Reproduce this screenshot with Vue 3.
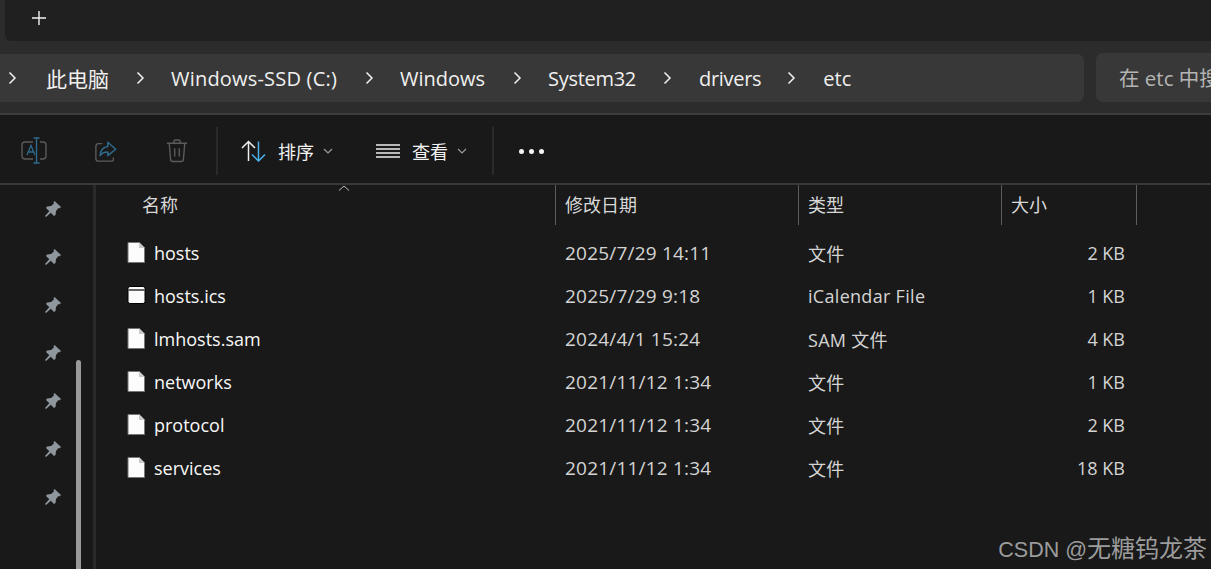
<template>
  <div class="win">
    <div class="tabstrip">
      <div class="tabbar">
        <svg class="plus" width="16" height="16" viewBox="0 0 16 16"><path d="M8 1v14M1 8h14" stroke="#f2f2f2" stroke-width="1.4" /></svg>
      </div>
    </div>

    <div class="nav">
      <div class="crumbs">
        <template v-for="c in crumbs" :key="c.name">
          <svg class="chev" :style="{ marginRight: c.gap + 'px' }" width="9" height="14" viewBox="0 0 9 14"><path d="M1.5 1.5 7 7l-5.500 5.500" fill="none" stroke="#f0f0f0" stroke-width="1.5" /></svg>
          <span class="crumb" :class="{ cjk: c.cjk }" :style="{ marginRight: c.after + 'px', letterSpacing: c.ls + 'px' }">{{ c.name }}</span>
        </template>
      </div>
      <div class="search">在 etc 中搜索</div>
    </div>

    <div class="toolbar">
      <svg class="tool t-rename" width="28" height="28" viewBox="0 0 28 28" fill="none">
        <path d="M13 5H5a3 3 0 0 0-3 3v11a3 3 0 0 0 3 3h8M20 5h3a3 3 0 0 1 3 3v11a3 3 0 0 1-3 3h-3" stroke="#5b5b5b" stroke-width="1.400" />
        <path d="M7 18 11 8.500 15 18M8.500 15h5" stroke="#2f6a8c" stroke-width="1.300" />
        <path d="M13.500 1h6M16.500 1v25M13.500 26h6" stroke="#2f6a8c" stroke-width="1.400" />
      </svg>
      <svg class="tool t-share" width="24" height="23" viewBox="0 0 26 25" fill="none">
        <path d="M9 4H5a3 3 0 0 0-3 3v13a3 3 0 0 0 3 3h14a3 3 0 0 0 2-1v-3" stroke="#5b5b5b" stroke-width="1.500" />
        <path d="M15 2.500 23.500 10 15 17v-4c-4 0-6.500 1-8.500 4 .5-5.500 3.500-9.500 8.500-10z" stroke="#2f6a8c" stroke-width="1.600" stroke-linejoin="round" />
      </svg>
      <svg class="tool t-trash" width="22" height="24" viewBox="0 0 24 26" fill="none" stroke="#5b5b5b" stroke-width="1.500">
        <path d="M1 4.500h22M8.500 4.500V3a2 2 0 0 1 2-2h3a2 2 0 0 1 2 2v1.500" />
        <path d="M3.500 4.500 5 22a2.500 2.500 0 0 0 2.500 2.500h9A2.500 2.500 0 0 0 19 22l1.500-17.500" />
        <path d="M9.500 10v9M14.500 10v9" />
      </svg>
      <div class="vsep first"></div>
      <svg class="sort" width="25" height="22" viewBox="0 0 25 22" fill="none" stroke-width="1.500">
        <path d="M1 8 7.500 1.500 14 8M7.500 1.500V21" stroke="#f0f0f0" />
        <path d="M11 14.500 17.500 21 24 14.500M17.500 21V1.500" stroke="#4cb2ea" />
      </svg>
      <span class="tlabel l-sort">排序</span>
      <svg class="caret" width="10" height="6" viewBox="0 0 10 6"><path d="M1 1l4 4 4-4" fill="none" stroke="#9a9a9a" stroke-width="1.200" /></svg>
      <svg class="lines" width="24" height="14" viewBox="0 0 24 14"><path d="M0 1h24M0 5h24M0 9h24M0 13h24" stroke="#ededed" stroke-width="1.300" /></svg>
      <span class="tlabel l-view">查看</span>
      <svg class="caret" width="10" height="6" viewBox="0 0 10 6"><path d="M1 1l4 4 4-4" fill="none" stroke="#9a9a9a" stroke-width="1.200" /></svg>
      <div class="vsep second"></div>
      <div class="more"><i></i><i></i><i></i></div>
    </div>

    <div class="body">
      <aside class="side">
        <svg v-for="n in 7" :key="n" class="pin" width="16" height="16" viewBox="0 0 16 16">
          <path d="M9.500 0 16 6l-1.500 1.500-1-.5L11 10l-.5 4L9 15l-3.200-3.300L1 16l-1-1 4.300-4.800L1 7l1-1.500L6 5l3-2.500-.5-1.300z" fill="#8f979e" />
        </svg>
        <div class="thumb"></div>
      </aside>
      <div class="split"></div>
      <main class="list">
        <div class="head row-grid">
          <div class="hcell hname">名称<svg class="sortup" width="12" height="6" viewBox="0 0 12 6"><path d="M1 5.500 6 1l5 4.500" fill="none" stroke="#bdbdbd" stroke-width="1" /></svg></div>
          <div class="hcell">修改日期</div>
          <div class="hcell">类型</div>
          <div class="hcell">大小</div>
          <div class="hcell last"></div>
        </div>
        <div class="rows">
          <div v-for="f in files" :key="f.name" class="row row-grid">
            <div class="cname">
              <svg v-if="f.cal" class="ficon" width="19" height="21" viewBox="0 0 19 21">
                <rect x="1" y="1.500" width="17" height="17" rx="2" fill="#fcfcfc" stroke="#000" />
                <path d="M1.500 5h16" stroke="#333" stroke-width="1.500" />
              </svg>
              <svg v-else class="ficon" width="19" height="21" viewBox="0 0 19 21">
                <path d="M1 .5h11.500L17.500 5.500v15H1z" fill="#fcfcfc" stroke="#777" />
                <path d="M12 .5v5.500h5.500z" fill="#c9c9c9" />
              </svg>
              <span>{{ f.name }}</span>
            </div>
            <div class="cell date">{{ f.date }}</div>
            <div class="cell type">{{ f.type }}</div>
            <div class="cell size">{{ f.size }}</div>
          </div>
        </div>
      </main>
    </div>
    <div class="mark"><span>CSDN @</span>无糖钨龙茶</div>
  </div>
</template>

<script setup>
const crumbs = [
  { name: '此电脑', gap: 29, after: 27, ls: 0, cjk: true },
  { name: 'Windows-SSD (C:)', gap: 26, after: 28, ls: 0.2 },
  { name: 'Windows', gap: 26, after: 28, ls: 0 },
  { name: 'System32', gap: 26, after: 27, ls: -0.3 },
  { name: 'drivers', gap: 27, after: 26, ls: -0.3 },
  { name: 'etc', gap: 27, after: 0, ls: 0 },
]

const files = [
  { name: 'hosts', date: '2025/7/29 14:11', type: '文件', size: '2 KB' },
  { name: 'hosts.ics', date: '2025/7/29 9:18', type: 'iCalendar File', size: '1 KB', cal: true },
  { name: 'lmhosts.sam', date: '2024/4/1 15:24', type: 'SAM 文件', size: '4 KB' },
  { name: 'networks', date: '2021/11/12 1:34', type: '文件', size: '1 KB' },
  { name: 'protocol', date: '2021/11/12 1:34', type: '文件', size: '2 KB' },
  { name: 'services', date: '2021/11/12 1:34', type: '文件', size: '18 KB' },
]
</script>

<style>
html, body { margin: 0; background: #191919; overflow: hidden; }
</style>

<style scoped>
.win {
  position: relative;
  width: 1211px; height: 569px; overflow: hidden;
  display: flex; flex-direction: column;
  background: #191919; color: #f2f2f2;
  font-family: "Open Sans", "Noto Sans", "Noto Sans CJK SC", sans-serif;
}

/* 탭 영역 */
.tabstrip { height: 41px; background: #2c2c2c; padding-left: 5px; flex: none; }
.tabbar {
  height: 41px; background: #202020;
  border-radius: 0 0 0 6px;
  display: flex; align-items: center; padding: 0 0 6px 26px; box-sizing: border-box;
}
.plus { display: block; }

/* 주소줄 */
.nav {
  height: 74px; flex: none; box-sizing: border-box;
  background: #2c2c2c; border-bottom: 2px solid #3d3d3d;
  padding: 13px 0 0;
  display: flex; align-items: flex-start; gap: 12px;
}
.crumbs {
  width: 1084px; height: 48px; flex: none; box-sizing: border-box;
  background: #383838; border-radius: 0 7px 7px 0;
  padding-left: 8px;
  display: flex; align-items: center;
  font-size: 20px;
}
.chev { flex: none; }
.crumb { white-space: nowrap; color: #f0f0f0; }
.crumb.cjk { font-size: 21px; }
.search {
  flex: 1; height: 49px; margin-top: -1px; box-sizing: border-box;
  background: #383838; border-radius: 7px 0 0 7px;
  padding-left: 23px; line-height: 50px;
  font-size: 20.5px; color: #b4b4b4; white-space: nowrap; overflow: hidden;
}

/* 툴바 */
.toolbar {
  height: 70px; flex: none; box-sizing: border-box;
  background: #191919; border-bottom: 2px solid #393939;
  display: flex; align-items: center; padding: 4px 0 0 20px;
}
.tool { flex: none; }
.t-share { margin-left: 46px; }
.t-trash { margin-left: 48px; }
.vsep { width: 2px; height: 48px; background: #2a2a2a; flex: none; }
.vsep.first { margin-left: 28px; }
.sort { margin-left: 23px; flex: none; }
.tlabel { font-size: 18px; color: #f2f2f2; flex: none; }
.l-sort { margin-left: 12px; }
.caret { margin-left: 9px; flex: none; }
.lines { margin-left: 43px; flex: none; }
.l-view { margin-left: 12px; }
.vsep.second { margin-left: 25px; }
.more { display: flex; gap: 5px; margin-left: 25px; }
.more i { width: 5px; height: 5px; border-radius: 50%; background: #f5f5f5; display: block; }

/* 본문 */
.body { flex: 1; display: flex; min-height: 0; }
.side {
  position: relative;
  width: 93px; flex: none; box-sizing: border-box;
  padding: 16px 0 0 45px;
  display: flex; flex-direction: column; gap: 32px;
}
.pin { flex: none; display: block; }
.thumb {
  position: absolute; left: 76px; top: 175px; bottom: -10px; width: 5px;
  background: #9a9a9a; border-radius: 3px;
}
.split { width: 3px; background: #2a2a2a; flex: none; }

.list { flex: 1; min-width: 0; }
.row-grid { display: grid; grid-template-columns: 459px 243px 203px 135px 1fr; }
.head { height: 40px; }
.hcell {
  position: relative;
  height: 40px; line-height: 40px; box-sizing: border-box;
  padding-left: 9px; font-size: 18px; color: #d8d8d8;
  border-left: 1px solid #5c5c5c;
}
.hcell.hname { border-left: 0; padding-left: 46px; }
.sortup { position: absolute; left: 242px; top: 0; }
.rows { padding-top: 6px; }
.row { height: 43px; align-items: center; font-size: 18px; }
.cname { display: flex; align-items: center; padding-left: 31px; color: #f8f8f8; white-space: nowrap; }
.ficon { flex: none; margin-right: 8px; }
.cell { padding-left: 10px; color: #d4d4d4; white-space: nowrap; }
.cell.date { font-size: 19px; letter-spacing: 0.2px; }
.cell.type { letter-spacing: 0.3px; }
.cell.size { text-align: right; padding-right: 11px; }
.mark {
  position: absolute; right: 4px; bottom: 5px;
  font-family: "Liberation Sans", "Noto Sans CJK SC", sans-serif;
  font-size: 24px; color: #9c9c9c; white-space: nowrap;
}
.mark span { font-size: 21.5px; }
</style>
